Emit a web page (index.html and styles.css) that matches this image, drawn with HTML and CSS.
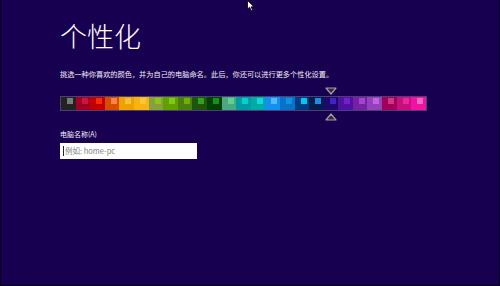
FILE: index.html
```html
<!DOCTYPE html>
<html lang="zh-CN">
<head>
    <meta charset="UTF-8">
    <meta name="viewport" content="width=device-width, initial-scale=1.0">
    <title>个性化</title>
    <link rel="stylesheet" href="styles.css">
</head>
<body>

<div class="page">
    <h1 class="title">个性化</h1>
    <p class="intro">挑选一种你喜欢的颜色，并为自己的电脑命名。此后，你还可以进行更多个性化设置。</p>

    <div class="palette">
        <div class="swatch"></div>
        <div class="swatch"></div>
        <div class="swatch"></div>
        <div class="swatch"></div>
        <div class="swatch"></div>
        <div class="swatch"></div>
        <div class="swatch"></div>
        <div class="swatch"></div>
        <div class="swatch"></div>
        <div class="swatch"></div>
        <div class="swatch"></div>
        <div class="swatch"></div>
        <div class="swatch"></div>
        <div class="swatch"></div>
        <div class="swatch"></div>
        <div class="swatch"></div>
        <div class="swatch"></div>
        <div class="swatch"></div>
        <div class="swatch selected">
            <svg class="marker marker-top" width="12" height="8" viewBox="0 0 12 8">
                <polygon points="1,1 11,1 6,7" fill="#302c36" stroke="#a19daa" stroke-width="1.2" stroke-linejoin="round"/>
            </svg>
            <svg class="marker marker-bottom" width="12" height="8" viewBox="0 0 12 8">
                <polygon points="1,7 11,7 6,1" fill="#302c36" stroke="#a19daa" stroke-width="1.2" stroke-linejoin="round"/>
            </svg>
        </div>
        <div class="swatch"></div>
        <div class="swatch"></div>
        <div class="swatch"></div>
        <div class="swatch"></div>
        <div class="swatch"></div>
        <div class="swatch"></div>
    </div>

    <label class="field-label">电脑名称(A)</label>
    <div class="name-box">
        <span class="caret"></span>
        <span class="hint">例如: home-pc</span>
    </div>
</div>

<svg class="pointer" width="9" height="12" viewBox="0 0 9 12">
    <path d="M0.5 0.5 L0.5 9 L2.6 7.2 L4.2 10.8 L5.6 10.2 L4.1 6.8 L7 6.8 Z" fill="#fff" stroke="#000" stroke-width="0.8"/>
</svg>

</body>
</html>
```

FILE: styles.css
```css
html, body {
    margin: 0;
    padding: 0;
}
body {
    width: 500px;
    height: 286px;
    box-sizing: border-box;
    background-color: #180050;
    border-left: 1px solid #07001c;
    border-right: 1px solid #07001c;
    border-bottom: 1px solid #07001c;
    font-family: "Noto Sans CJK SC", "Noto Sans", sans-serif;
    color: #fff;
    position: relative;
    overflow: hidden;
}
.page {
    padding: 22px 0 0 59px;
    display: flex;
    flex-direction: column;
    align-items: flex-start;
}
.title {
    margin: 0;
    font-size: 27px;
    font-weight: 300;
    line-height: 28px;
    letter-spacing: 0;
}
.intro {
    margin: 19px 0 0 0;
    font-size: 7.2px;
    line-height: 10px;
    color: #f0eef8;
}
.palette {
    margin-top: 17px;
    width: 367px;
    height: 15px;
    box-sizing: border-box;
    border: 1px solid #4c3f74;
    display: flex;
}
.swatch {
    flex: 1;
    position: relative;
    background: var(--base);
}
.swatch::after {
    content: "";
    position: absolute;
    top: 1px;
    left: 6px;
    width: 6px;
    height: 6px;
    background: var(--tint);
}
.swatch:nth-child(1)  { --base: #222222; --tint: #7a7a7a; }
.swatch:nth-child(2)  { --base: #a00026; --tint: #d0143c; }
.swatch:nth-child(3)  { --base: #c30000; --tint: #f52c0a; }
.swatch:nth-child(4)  { --base: #d84c00; --tint: #f8844c; }
.swatch:nth-child(5)  { --base: #eda200; --tint: #f6bf3e; }
.swatch:nth-child(6)  { --base: #f8b312; --tint: #fcc63c; }
.swatch:nth-child(7)  { --base: #86a040; --tint: #90c41a; }
.swatch:nth-child(8)  { --base: #5ea100; --tint: #82c814; }
.swatch:nth-child(9)  { --base: #4a7f0e; --tint: #72b006; }
.swatch:nth-child(10) { --base: #1f5410; --tint: #2ea41a; }
.swatch:nth-child(11) { --base: #004000; --tint: #14921a; }
.swatch:nth-child(12) { --base: #4aa882; --tint: #5fd094; }
.swatch:nth-child(13) { --base: #009aa2; --tint: #00d2d4; }
.swatch:nth-child(14) { --base: #00aaa6; --tint: #10dcd6; }
.swatch:nth-child(15) { --base: #1290f2; --tint: #54bbf8; }
.swatch:nth-child(16) { --base: #0871c8; --tint: #1492e2; }
.swatch:nth-child(17) { --base: #003a82; --tint: #00c6f0; }
.swatch:nth-child(18) { --base: #0b1a4e; --tint: #1990e0; }
.swatch:nth-child(19) { --base: #1b0a6a; --tint: #4222c2; }
.swatch:nth-child(20) { --base: #5010a2; --tint: #7222c4; }
.swatch:nth-child(21) { --base: #7222a2; --tint: #a442d2; }
.swatch:nth-child(22) { --base: #9242ba; --tint: #c462e2; }
.swatch:nth-child(23) { --base: #a0005a; --tint: #d23484; }
.swatch:nth-child(24) { --base: #c8107c; --tint: #f222a4; }
.swatch:nth-child(25) { --base: #f012a2; --tint: #f866c4; }

.marker {
    position: absolute;
    left: 50%;
    margin-left: -6px;
    display: block;
}
.marker-top {
    top: -10px;
}
.marker-bottom {
    bottom: -11px;
}

.field-label {
    margin-top: 18px;
    font-size: 7px;
    line-height: 10px;
    color: #f0eef8;
}
.name-box {
    margin-top: 4px;
    width: 137px;
    height: 16px;
    box-sizing: border-box;
    background: #ffffff;
    padding-left: 3px;
    display: flex;
    align-items: center;
    gap: 1px;
}
.caret {
    width: 1px;
    height: 10px;
    background: #222;
}
.hint {
    font-size: 7.5px;
    color: #7e7e7e;
    line-height: 10px;
}
.pointer {
    position: absolute;
    top: 0;
    left: 246px;
}
```
